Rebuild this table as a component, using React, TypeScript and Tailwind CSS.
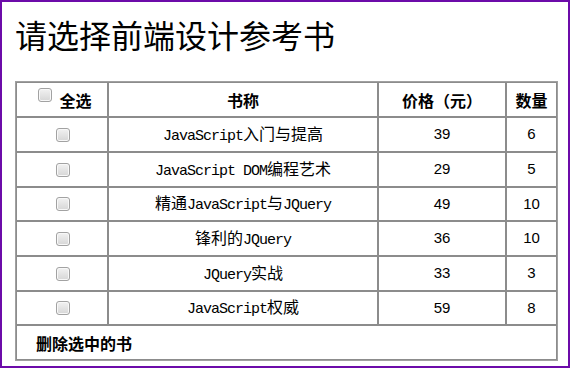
import React from "react";

type Book = { name: string; price: number; count: number };

const books: Book[] = [
  { name: "JavaScript入门与提高", price: 39, count: 6 },
  { name: "JavaScript DOM编程艺术", price: 29, count: 5 },
  { name: "精通JavaScript与JQuery", price: 49, count: 10 },
  { name: "锋利的JQuery", price: 36, count: 10 },
  { name: "JQuery实战", price: 33, count: 3 },
  { name: "JavaScript权威", price: 59, count: 8 },
];

// 半角は等幅、全角は CJK フォントで描く
const BookName = ({ text }: { text: string }) => {
  const parts = text.match(/[\x00-\x7F]+|[^\x00-\x7F]+/g) || [];
  return (
    <>
      {parts.map((p, i) =>
        /^[\x00-\x7F]+$/.test(p) ? (
          <span key={i} className="font-['Liberation_Mono',monospace] text-[15px] tracking-[-1px] whitespace-pre">
            {p}
          </span>
        ) : (
          <span key={i} className="font-['Noto_Sans_CJK_SC',sans-serif] text-[16px]">
            {p}
          </span>
        )
      )}
    </>
  );
};

const Box = ({ className = "" }: { className?: string }) => (
  <span
    className={
      "inline-block w-[14px] h-[14px] rounded-[3px] border border-[#a2a2a2] bg-gradient-to-b from-[#f2f2f2] to-[#d6d6d6] shadow-[inset_0_0_0_1px_#f8f8f8] " +
      className
    }
  />
);

const cell = "border border-[#8c8c8c] p-0 text-center align-middle";

export default function App() {
  return (
    <div className="w-[570px] h-[368px] border-2 border-[#6c0ba9] bg-white pl-[13px] font-['Noto_Sans_CJK_SC',sans-serif] text-black">
      <h1 className="mt-[9px] text-[32px] leading-[46px] font-normal">请选择前端设计参考书</h1>
      <table className="mt-[24px] w-[543px] border-separate border-spacing-0 border border-[#a0a0a0] table-fixed">
        <colgroup>
          <col className="w-[92px]" />
          <col className="w-[270px]" />
          <col className="w-[128px]" />
          <col />
        </colgroup>
        <thead>
          <tr className="h-[35px]">
            <th className={cell}>
              <div className="flex items-center justify-center gap-[7px] pl-[6px] text-[16px] font-bold">
                <Box className="mb-[10px]" />
                <span>全选</span>
              </div>
            </th>
            <th className={cell + " text-[16px] font-bold"}>书称</th>
            <th className={cell + " text-[16px] font-bold"}>价格（元）</th>
            <th className={cell + " text-[16px] font-bold"}>数量</th>
          </tr>
        </thead>
        <tbody>
          {books.map((b, i) => (
            <tr key={i} className={i === 2 || i === 5 ? "h-[34px]" : "h-[35px]"}>
              <td className={cell}>
                <div className="flex justify-center pl-[2px]">
                  <Box />
                </div>
              </td>
              <td className={cell}>
                <BookName text={b.name} />
              </td>
              <td className={cell + " font-['Liberation_Sans',sans-serif] text-[15px]"}>{b.price}</td>
              <td className={cell + " font-['Liberation_Sans',sans-serif] text-[15px]"}>{b.count}</td>
            </tr>
          ))}
          <tr className="h-[35px]">
            <td colSpan={4} className="border border-[#8c8c8c] text-left align-middle pl-[19px] text-[16px] font-bold">
              删除选中的书
            </td>
          </tr>
        </tbody>
      </table>
    </div>
  );
}
